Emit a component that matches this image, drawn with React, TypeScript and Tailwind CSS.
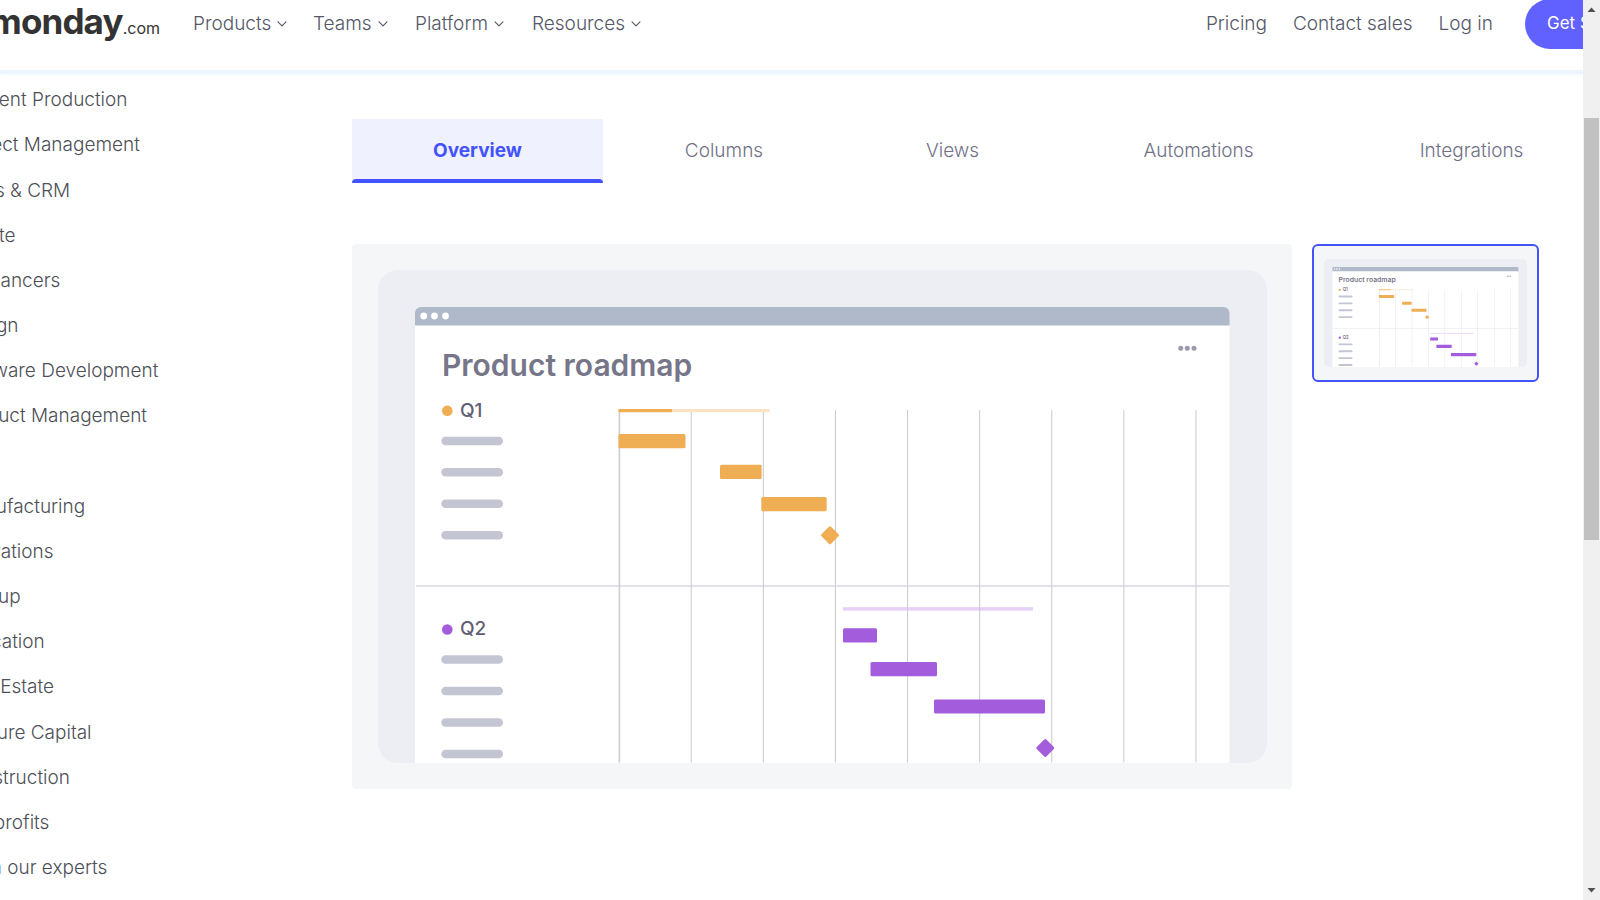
import React from 'react';

const navLinks = [
  { label: 'Products', width: 'w-[120px]' },
  { label: 'Teams', width: 'w-[102px]' },
  { label: 'Platform', width: 'w-[117px]' },
  { label: 'Resources', width: 'w-[120px]' },
];

const categories = [
  'Content Production',
  'Project Management',
  'Sales & CRM',
  'Create',
  'Freelancers',
  'Design',
  'Software Development',
  'Product Management',
  'HR',
  'Manufacturing',
  'Operations',
  'Startup',
  'Education',
  'Real Estate',
  'Venture Capital',
  'Construction',
  'Nonprofits',
  'From our experts',
];

const tabs = ['Overview', 'Columns', 'Views', 'Automations', 'Integrations'];

const gridLines = [0, 1, 2, 3, 4, 5, 6, 7, 8];
const pillRows = [171, 202.3, 233.8, 265.3, 389.5, 421, 452.5, 484];

const bars = [
  { x: 240.5, y: 164, w: 67, fill: '#f0ae54' },
  { x: 342, y: 194.7, w: 41.7, fill: '#f0ae54' },
  { x: 383.3, y: 227, w: 65.4, fill: '#f0ae54' },
  { x: 465, y: 358.2, w: 34, fill: '#a35ddc' },
  { x: 492.5, y: 392, w: 66.5, fill: '#a35ddc' },
  { x: 556, y: 429.4, w: 111, fill: '#a35ddc' },
];

const diamonds = [
  { x: 452, y: 265.3, fill: '#f0ae54' },
  { x: 667.3, y: 478, fill: '#a35ddc' },
];

function Chevron() {
  return (
    <svg width="10" height="6" viewBox="0 0 10 6" fill="none" stroke="#535768" strokeWidth="1.1" aria-hidden="true">
      <path d="M1 0.8 L5 4.8 L9 0.8" strokeLinecap="round" strokeLinejoin="round" />
    </svg>
  );
}

function RoadmapArt({ className }: { className: string }) {
  return (
    <svg viewBox="0 0 889 493" preserveAspectRatio="none" className={className} role="img" aria-label="Product roadmap">
      <rect width="889" height="493" rx="20" fill="#edeef3" />
      <path d="M37 55h814.5v438H37z" fill="#ffffff" />
      <path d="M37 55.5V43a6 6 0 0 1 6-6h802.5a6 6 0 0 1 6 6v12.5z" fill="#b0b9c9" />
      {[45.7, 56.5, 67.5].map((x) => (
        <circle key={x} cx={x} cy="46" r="3.4" fill="#ffffff" />
      ))}
      {[802.7, 809.3, 816].map((x) => (
        <circle key={x} cx={x} cy="78.3" r="2.5" fill="#9a99ad" />
      ))}
      <text x="64" y="106" fontSize="30" fontWeight="600" fill="#767688">
        Product roadmap
      </text>
      <circle cx="69.3" cy="140.7" r="5.3" fill="#f0ae54" />
      <text x="82" y="147" fontSize="19" fontWeight="500" fill="#5f6075">
        Q1
      </text>
      <circle cx="69.3" cy="359.5" r="5.3" fill="#a35ddc" />
      <text x="82" y="365" fontSize="19" fontWeight="500" fill="#5f6075">
        Q2
      </text>
      {pillRows.map((y) => (
        <rect key={y} x="63.3" y={y - 4.3} width="61.7" height="8.6" rx="4.3" fill="#c4c5d3" />
      ))}
      <rect x="38" y="315" width="813.5" height="2" fill="#e2e2e8" />
      <rect x="465" y="337.2" width="190" height="3.4" fill="#e5cff6" />
      {gridLines.map((i) => (
        <rect key={i} x={240.6 + 72.1 * i} y="140" width={i === 0 ? 1.6 : 1.1} height="352.5" fill="#cdcdd4" />
      ))}
      <rect x="240.5" y="139" width="151.2" height="3.2" fill="#fae3c3" />
      <rect x="240.5" y="139" width="53.5" height="3.2" fill="#f0ae54" />
      {bars.map((b) => (
        <rect key={b.x} x={b.x} y={b.y} width={b.w} height="14.2" rx="1.5" fill={b.fill} />
      ))}
      {diamonds.map((d) => (
        <rect
          key={d.x}
          x={d.x - 6.8}
          y={d.y - 6.8}
          width="13.6"
          height="13.6"
          rx="1.5"
          fill={d.fill}
          transform={`rotate(45 ${d.x} ${d.y})`}
        />
      ))}
    </svg>
  );
}

function Header() {
  return (
    <header className="flex h-[74px] shrink-0 items-start border-b-4 border-[#eef6fd] text-[19px] font-light text-[#535768] shadow-[0_1px_4px_#f4f9fe]">
      <div className="flex h-12 w-full items-center">
        <a href="#home" className="flex w-[193px] shrink-0 items-baseline justify-end pr-[33px] text-[#333333]">
          <span className="text-[35px] leading-10 font-bold tracking-tight">monday</span>
          <span className="text-base leading-10 font-normal">.com</span>
        </a>
        <nav className="flex" aria-label="Main">
          {navLinks.map((link) => (
            <button key={link.label} type="button" className={`flex items-center gap-[6px] ${link.width}`}>
              {link.label}
              <Chevron />
            </button>
          ))}
        </nav>
        <div className="-mr-[102px] ml-auto flex shrink-0 items-center">
          <a href="#pricing" className="mr-[26px]">Pricing</a>
          <a href="#sales" className="mr-[26px]">Contact sales</a>
          <a href="#login" className="mr-8">Log in</a>
          <button type="button" className="h-[50px] w-40 rounded-full bg-[#6161ff] pl-[22px] text-left text-[17px] font-normal text-white">
            Get Started
          </button>
        </div>
      </div>
    </header>
  );
}

function Scrollbar() {
  return (
    <div className="flex w-[17px] shrink-0 flex-col items-center bg-[#f0f0f0]" aria-hidden="true">
      <svg width="17" height="17" viewBox="0 0 17 17" className="shrink-0">
        <path d="M4.5 12h8L8.5 7.5z" fill="#505050" />
      </svg>
      <div className="mt-[101px] h-[422px] w-[15px] bg-[#c1c1c1]" />
      <svg width="17" height="17" viewBox="0 0 17 17" className="mt-auto shrink-0">
        <path d="M4.5 5h8L8.5 9.5z" fill="#505050" />
      </svg>
    </div>
  );
}

export default function App() {
  return (
    <div className="flex h-screen overflow-hidden bg-white font-[Inter,sans-serif]">
      <div className="flex min-w-0 flex-1 flex-col overflow-hidden">
        <Header />
        <div className="flex min-h-0 flex-1">
          <aside className="w-[352px] shrink-0 pt-1">
            <ul className="-ml-[43px] grid h-[813px] auto-rows-fr">
              {categories.map((name) => (
                <li key={name} className="flex items-center">
                  <a href="#category" className="text-[19px] font-light whitespace-nowrap text-[#4d4f57]">
                    {name}
                  </a>
                </li>
              ))}
            </ul>
          </aside>
          <main className="min-w-0 flex-1 pt-[45px]">
            <div role="tablist" className="grid h-16 grid-cols-[251px_242px_215px_277px_269px] text-[19px]">
              {tabs.map((tab, i) => (
                <button
                  key={tab}
                  type="button"
                  role="tab"
                  aria-selected={i === 0}
                  className={
                    i === 0
                      ? 'flex flex-col bg-[#eff1ff] font-bold text-[#4353ff]'
                      : 'flex flex-col pb-1 font-light text-[#6f7085]'
                  }
                >
                  <span className="flex w-full flex-1 items-center justify-center pt-1">{tab}</span>
                  {i === 0 && <span className="h-1 w-full rounded-t-sm bg-[#4353ff]" />}
                </button>
              ))}
            </div>
            <div className="mt-[61px] flex items-start gap-5 pr-11">
              <div className="flex-1 rounded bg-[#f5f6f8] py-[26px] pr-[25px] pl-[26px]">
                <RoadmapArt className="block w-full" />
              </div>
              <button
                type="button"
                aria-label="Show product roadmap"
                className="h-[138px] w-[227px] shrink-0 rounded-md border-2 border-[#4353ff] bg-[#f5f6f8] px-[10px] py-[13px]"
              >
                <RoadmapArt className="block h-full w-full" />
              </button>
            </div>
          </main>
        </div>
      </div>
      <Scrollbar />
    </div>
  );
}
